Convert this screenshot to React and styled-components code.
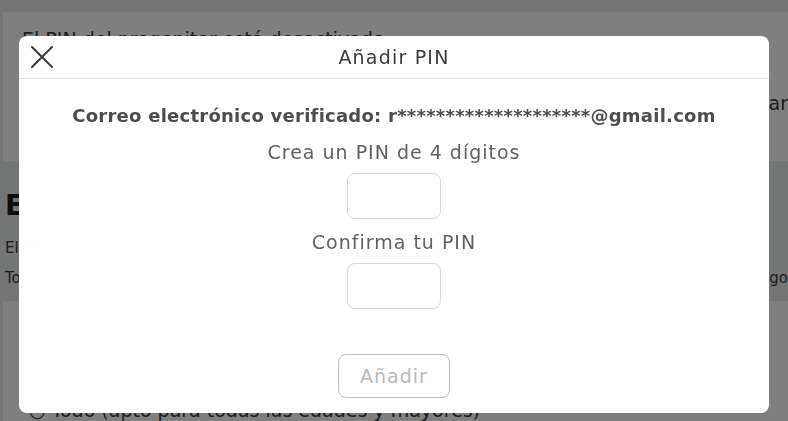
import React from 'react'
import styled, { createGlobalStyle } from 'styled-components'

const Global = createGlobalStyle`
  html, body { margin: 0; padding: 0; }
  body {
    background: #e9eaeb;
    font-family: "DejaVu Sans", "Noto Sans", sans-serif;
    color: #393b3d;
    overflow: hidden;
  }
`

const Page = styled('div')`
  display: flex;
  flex-flow: column nowrap;
  padding: 12px 0 0 3px;
  height: 421px;
  box-sizing: border-box;
`

const Panel = styled('div')`
  background: #fff;
  height: ${p => p.h}px;
  padding: ${p => p.pad || '0'};
  box-sizing: border-box;
  display: flex;
  flex-flow: column nowrap;
`

const PanelRow = styled('div')`
  display: flex;
  justify-content: space-between;
  align-items: center;
  margin-top: 38px;
`

const PanelText = styled('div')`
  font-size: 19px;
  line-height: 26px;
`

const Section = styled('div')`
  height: 142px;
  padding: 28px 0 0 2px;
  box-sizing: border-box;
`

const Heading = styled('h2')`
  margin: 0 0 16px;
  font-size: 28px;
  font-weight: 700;
  line-height: 34px;
  color: #191919;
`

const SmallLine = styled('div')`
  display: flex;
  justify-content: space-between;
  font-size: 15px;
  line-height: 18px;
  margin-bottom: 12px;
`

const Overlay = styled('div')`
  position: fixed;
  inset: 0;
  background: rgba(0, 0, 0, 0.5);
`

const Modal = styled('div')`
  position: fixed;
  top: 36px;
  left: 19px;
  width: 750px;
  height: 377px;
  background: #fff;
  border-radius: 8px;
  display: flex;
  flex-flow: column nowrap;
  overflow: hidden;
`

const Header = styled('div')`
  height: 42px;
  border-bottom: 1px solid #e3e3e3;
  display: flex;
  align-items: center;
  justify-content: center;
  position: relative;
  flex-shrink: 0;
`

const Title = styled('h1')`
  margin: 0;
  font-size: 19px;
  letter-spacing: 1.2px;
  font-weight: 400;
  color: #393b3d;
`

const Close = styled('button')`
  position: absolute;
  left: 11px;
  top: 8px;
  width: 24px;
  height: 26px;
  padding: 0;
  border: 0;
  background: none;
  display: flex;
  align-items: center;
  justify-content: center;
`

const Body = styled('div')`
  display: flex;
  flex-flow: column nowrap;
  align-items: center;
  padding-top: 25px;
`

const Email = styled('div')`
  font-size: 18px;
  font-weight: 700;
  letter-spacing: 0.25px;
  line-height: 24px;
  color: #4b4d4f;
  margin-bottom: 12px;
`

const Label = styled('div')`
  font-size: 19px;
  letter-spacing: 1px;
  line-height: 24px;
  color: #606162;
  margin-bottom: 9px;
`

const PinInput = styled('input')`
  width: 94px;
  height: 46px;
  box-sizing: border-box;
  border: 1px solid #d8d8d8;
  border-radius: 8px;
  background: #fff;
  margin-bottom: ${p => p.mb}px;
  outline: none;
`

const AddButton = styled('button')`
  width: 112px;
  height: 44px;
  box-sizing: border-box;
  border: 1px solid #bdbebe;
  border-radius: 8px;
  background: #fff;
  color: #b8b9ba;
  font-family: inherit;
  font-size: 19px;
  letter-spacing: 1px;
`

function App() {
  return (
    <>
      <Global />
      <Page>
        <Panel h={151} pad="14px 0 0 19px">
          <PanelText>El PIN del progenitor está desactivado</PanelText>
          <PanelRow>
            <span />
            <PanelText>Verificar</PanelText>
          </PanelRow>
        </Panel>
        <Section>
          <Heading>Experiencias permitidas</Heading>
          <SmallLine><span>El nivel de madurez se aplica</span></SmallLine>
          <SmallLine><span>Todas las</span><span>disponibles en el catálogo</span></SmallLine>
        </Section>
        <Panel h={120} pad="96px 0 0 26px">
          <PanelText>○ Todo (apto para todas las edades y mayores)</PanelText>
        </Panel>
      </Page>
      <Overlay />
      <Modal>
        <Header>
          <Close aria-label="Cerrar">
            <svg width="22" height="22" viewBox="0 0 22 22">
              <path d="M1 1 L21 21 M21 1 L1 21" stroke="#393b3d" strokeWidth="2" strokeLinecap="round" />
            </svg>
          </Close>
          <Title>Añadir PIN</Title>
        </Header>
        <Body>
          <Email>Correo electrónico verificado: r********************@gmail.com</Email>
          <Label>Crea un PIN de 4 dígitos</Label>
          <PinInput type="password" mb={11} />
          <Label>Confirma tu PIN</Label>
          <PinInput type="password" mb={45} />
          <AddButton disabled>Añadir</AddButton>
        </Body>
      </Modal>
    </>
  )
}

export default App
